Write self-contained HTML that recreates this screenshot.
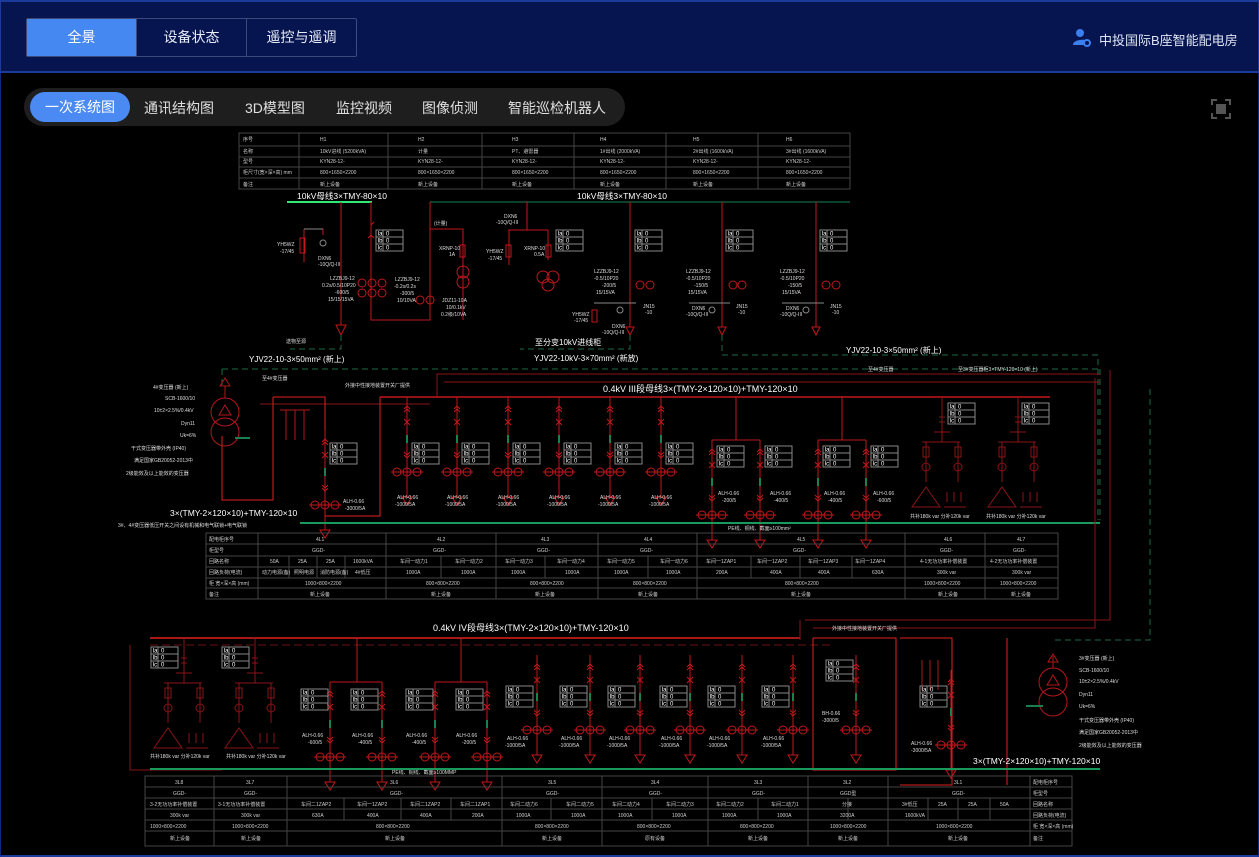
<!DOCTYPE html>
<html><head><meta charset="utf-8">
<style>
*{margin:0;padding:0;box-sizing:border-box}
body{width:1259px;height:857px;background:#000;overflow:hidden;position:relative;font-family:"Liberation Sans","Noto Sans CJK SC",sans-serif}
#hdr{position:absolute;left:0;top:0;width:1259px;height:73px;background:#061550;border-top:2px solid #1b3a9a;border-bottom:2px solid #1b3a9a;border-left:1px solid #1b3a9a;border-right:1px solid #1b3a9a}
.tabs{position:absolute;left:25px;top:16px;height:39px;display:flex;border:1px solid #3a4a7a;border-radius:2px}
.tabs div{width:110px;height:37px;line-height:37px;text-align:center;color:#e8ecf8;font-size:14px;border-left:1px solid #3a4a7a}
.tabs div:first-child{border-left:none;background:#4688f1;width:109px;color:#fff}
#user{position:absolute;left:1098px;top:28px;color:#dfe4f2;font-size:13px}
#frame{position:absolute;left:0;top:73px;width:1259px;height:784px;border-left:1px solid #0d2a80;border-right:1px solid #0d2a80;border-bottom:2px solid #1b3a9a}
#pill{position:absolute;left:24px;top:88px;width:601px;height:38px;background:#1e1e1e;border-radius:19px}
#pill span{position:absolute;top:10px;color:#e0e0e0;font-size:14px;white-space:nowrap}
#pill .act{left:6px;top:4px;width:100px;height:30px;background:#4a8af2;border-radius:15px;color:#fff;line-height:30px;text-align:center}
svg{position:absolute;left:0;top:0}
</style></head><body>
<div id="hdr">
 <div class="tabs"><div>全景</div><div>设备状态</div><div>遥控与遥调</div></div>
 <svg style="left:1071px;top:26px" width="20" height="20" viewBox="0 0 20 20"><circle cx="8" cy="5" r="4" fill="#3b7ff0"/><path d="M1,17 C1,11 15,11 15,13 L15,17Z" fill="#3b7ff0"/><circle cx="15" cy="15" r="3" fill="#061550" stroke="#3b7ff0" stroke-width="2"/></svg>
 <div id="user">中投国际B座智能配电房</div>
</div>
<div id="frame"></div>
<div id="pill"><span class="act">一次系统图</span><span style="left:120px">通讯结构图</span><span style="left:221px">3D模型图</span><span style="left:312px">监控视频</span><span style="left:398px">图像侦测</span><span style="left:484px">智能巡检机器人</span></div>
<svg style="left:1211px;top:99px" width="20" height="20"><path d="M1,6V1H6M14,1H19V6M19,14V19H14M6,19H1V14" stroke="#555" stroke-width="2" fill="none"/><rect x="5" y="5" width="10" height="10" fill="#555"/></svg>

<svg width="1259" height="857" font-family="Liberation Sans,Noto Sans CJK SC,sans-serif">
<defs>
 <g id="fd" stroke="#c0181c" fill="none">
  <line x1="0" y1="0" x2="0" y2="100"/>
  <path d="M-3,12L0,9L3,12M-3,15L0,12L3,15M-3,22L3,28M3,22L-3,28M-3,55L0,58L3,55M-3,58L0,61L3,58"/>
  <line x1="0" y1="38" x2="0" y2="46" stroke="#1a8050" stroke-width="2"/>
  <line x1="-16" y1="75" x2="16" y2="75"/><circle cx="0" cy="75" r="4"/><circle cx="-10" cy="75" r="4"/><circle cx="10" cy="75" r="4"/>
  <path d="M-5,100L5,100L0,108Z"/>
 </g>
 <g id="ib" font-size="6" fill="#fff">
  <rect x="0" y="0" width="27" height="21" fill="none" stroke="#888"/>
  <path d="M0,7H27M0,14H27M7,0V21" stroke="#888"/>
  <text x="1.5" y="5.5">Ia</text><text x="10" y="5.5">0</text>
  <text x="1.5" y="12.5">Ib</text><text x="10" y="12.5">0</text>
  <text x="1.5" y="19.5">Ic</text><text x="10" y="19.5">0</text>
 </g>
 <g id="cap" stroke="#8a1418" fill="none">
  <line x1="0" y1="0" x2="0" y2="45"/><path d="M-3,20h6M-3,25h6M-8,35h16"/>
  <path d="M-20,45H18M-16,45V85M16,45V85"/>
  <rect x="-19" y="50" width="6" height="10"/><rect x="13" y="50" width="6" height="10"/>
  <circle cx="-16" cy="70" r="4"/><circle cx="16" cy="70" r="4"/>
  <path d="M-30,110L-16,90L-2,110Z M5,105V95M12,105V95M19,105V95M2,110H24"/>
 </g>
 <g id="vt" stroke="#b0181c" fill="none"><circle cx="0" cy="0" r="14"/><circle cx="0" cy="20" r="14"/><path d="M-6,3L0,-7L6,3Z"/></g>
</defs>

<g stroke="#444" fill="none">
 <rect x="239" y="133" width="611" height="56"/>
 <path d="M239,146H850M239,157H850M239,167H850M239,178H850M299,133V189M388,133V189M482,133V189M574,133V189M666,133V189M758,133V189"/>
</g>
<g font-size="5" fill="#ccc">
 <text x="243" y="141">序号</text><text x="243" y="153">名称</text><text x="243" y="163">型号</text><text x="243" y="174">柜尺寸(宽×深×高) mm</text><text x="243" y="186">备注</text>
 <text x="320" y="141">H1</text><text x="418" y="141">H2</text><text x="512" y="141">H3</text><text x="600" y="141">H4</text><text x="693" y="141">H5</text><text x="786" y="141">H6</text>
 <text x="320" y="153">10kV进线 (5200kVA)</text><text x="418" y="153">计量</text><text x="512" y="153">PT、避雷器</text><text x="600" y="153">1#出线 (2000kVA)</text><text x="693" y="153">2#出线 (1600kVA)</text><text x="786" y="153">3#出线 (1600kVA)</text>
 <text x="320" y="163">KYN28-12-</text><text x="418" y="163">KYN28-12-</text><text x="512" y="163">KYN28-12-</text><text x="600" y="163">KYN28-12-</text><text x="693" y="163">KYN28-12-</text><text x="786" y="163">KYN28-12-</text>
 <text x="320" y="174">800×1650×2200</text><text x="418" y="174">800×1650×2200</text><text x="512" y="174">800×1650×2200</text><text x="600" y="174">800×1650×2200</text><text x="693" y="174">800×1650×2200</text><text x="786" y="174">800×1650×2200</text>
 <text x="320" y="186">新上设备</text><text x="418" y="186">新上设备</text><text x="512" y="186">新上设备</text><text x="600" y="186">新上设备</text><text x="693" y="186">新上设备</text><text x="786" y="186">新上设备</text>
</g>

<text x="297" y="199" font-size="8.5" fill="#fff">10kV母线3×TMY-80×10</text>
<text x="577" y="199" font-size="8.5" fill="#fff">10kV母线3×TMY-80×10</text>
<line x1="287" y1="202" x2="372" y2="202" stroke="#2ee87a" stroke-width="2"/>
<line x1="430" y1="202" x2="850" y2="202" stroke="#1a8050" stroke-width="1"/>
<g stroke="#c0181c" fill="none">
 <path d="M341,202V325M371,202V320H430V202M304,229H323V235M304,229V262"/>
 <rect x="300" y="238" width="5" height="15"/>
 <path d="M430,229H463V320M463,229"/>
 <path d="M371,225L374,222M371,235l-3,3 3,-3 3,3"/>
 <path d="M336,325L346,325L341,335Z"/>
 <circle cx="372" cy="283" r="4"/><circle cx="382" cy="283" r="4"/><circle cx="362" cy="283" r="4"/><circle cx="372" cy="293" r="4"/><circle cx="382" cy="293" r="4"/><circle cx="362" cy="293" r="4"/><circle cx="420" cy="300" r="4"/><circle cx="430" cy="300" r="4"/>
 <circle cx="463" cy="272" r="6"/><circle cx="463" cy="282" r="6"/><rect x="460" y="245" width="5" height="12"/>
 <path d="M527,202V230M508,230H548M509,230V265M548,230V260"/><rect x="506" y="245" width="5" height="12"/><rect x="546" y="245" width="5" height="12"/>
 <circle cx="543" cy="277" r="6"/><circle cx="553" cy="277" r="6"/><circle cx="548" cy="285" r="6"/>
 <path d="M630,202V327M722,202V327M816,202V327"/>
 <path d="M626,327h8l-4,8z M718,327h8l-4,8z M812,327h8l-4,8z"/>
 <circle cx="640" cy="285" r="4"/><circle cx="650" cy="285" r="4"/><circle cx="733" cy="285" r="4"/><circle cx="742" cy="285" r="4"/><circle cx="826" cy="285" r="4"/><circle cx="836" cy="285" r="4"/>
 <rect x="592" y="310" width="5" height="12"/>
</g>
<g stroke="#888" fill="none"><path d="M594,303H636M689,303H730M782,303H824M304,229H323"/><circle cx="323" cy="243" r="3"/><circle cx="620" cy="310" r="3"/><circle cx="712" cy="310" r="3"/><circle cx="806" cy="310" r="3"/></g>
<use href="#ib" x="376" y="230"/><use href="#ib" x="556" y="230"/><use href="#ib" x="635" y="230"/><use href="#ib" x="726" y="230"/><use href="#ib" x="820" y="230"/>
<g font-size="5" fill="#ddd">
 <text x="277" y="246">YH5WZ</text><text x="280" y="253">-17/45</text><text x="318" y="260">DXN6</text><text x="318" y="266">-10Q/Q-III</text>
 <text x="330" y="280">LZZBJ9-12</text><text x="322" y="287">0.2s/0.5/10P20</text><text x="335" y="294">-600/5</text><text x="328" y="301">15/15/15VA</text>
 <text x="395" y="281">LZZBJ9-12</text><text x="394" y="288">-0.2s/0.2s</text><text x="400" y="295">-300/5</text><text x="397" y="302">10/10VA</text>
 <text x="442" y="302">JDZ11-10A</text><text x="446" y="309">10/0.1kV</text><text x="441" y="316">0.2级/10VA</text>
 <text x="434" y="225">(计量)</text><text x="439" y="250">XRNP-10</text><text x="449" y="256">1A</text>
 <text x="504" y="218">DXN6</text><text x="496" y="224">-10Q/Q-III</text><text x="486" y="253">YH5WZ</text><text x="488" y="260">-17/45</text><text x="524" y="250">XRNP-10</text><text x="534" y="256">0.5A</text>
 <text x="594" y="273">LZZBJ9-12</text><text x="594" y="280">-0.5/10P20</text><text x="602" y="287">-200/5</text><text x="596" y="294">15/15VA</text>
 <text x="686" y="273">LZZBJ9-12</text><text x="686" y="280">-0.5/10P20</text><text x="694" y="287">-150/5</text><text x="688" y="294">15/15VA</text>
 <text x="780" y="273">LZZBJ9-12</text><text x="780" y="280">-0.5/10P20</text><text x="788" y="287">-150/5</text><text x="782" y="294">15/15VA</text>
 <text x="572" y="316">YH5WZ</text><text x="574" y="322">-17/45</text><text x="612" y="328">DXN6</text><text x="602" y="334">-10Q/Q-III</text><text x="643" y="308">JN15</text><text x="645" y="314">-10</text>
 <text x="692" y="310">DXN6</text><text x="686" y="316">-10Q/Q-III</text><text x="736" y="308">JN15</text><text x="738" y="314">-10</text>
 <text x="786" y="310">DXN6</text><text x="780" y="316">-10Q/Q-III</text><text x="830" y="308">JN15</text><text x="832" y="314">-10</text>
 <text x="286" y="343">送物至源</text>
</g>
<g font-size="8" fill="#fff">
 <text x="249" y="362">YJV22-10-3×50mm² (新上)</text><text x="535" y="345">至分变10kV进线柜</text><text x="534" y="361">YJV22-10kV-3×70mm² (新放)</text><text x="846" y="353">YJV22-10-3×50mm² (新上)</text>
</g>
<g stroke="#1a6a44" fill="none" stroke-dasharray="6,4">
 <path d="M222,369H1100M341,335V349H290M630,335V349H520M722,335V355H1098V520M222,369V385M1100,369V520"/>
</g>

<text x="603" y="392" font-size="9" fill="#fff">0.4kV III段母线3×(TMY-2×120×10)+TMY-120×10</text>
<g stroke="#8a1418" fill="none"><path d="M437,397V374H1100M444,382H1100M430,404H260"/></g>
<line x1="380" y1="397" x2="1050" y2="397" stroke="#c0181c" stroke-width="1.5"/>
<g stroke="#e02020" fill="none"><path d="M273,397H325V516H380V397"/><path d="M222,436V500H273V397"/></g>
<use href="#vt" x="225" y="412"/>
<g stroke="#b0181c" fill="none"><path d="M225,386V398M220,386h10l-5,-8z"/><path d="M286,410V440M295,410V440M304,410V440M280,410H310"/></g>
<line x1="235" y1="438" x2="250" y2="438" stroke="#1a8050" stroke-width="2"/>
<use href="#fd" x="325" y="430"/>
<use href="#ib" x="330" y="443"/>
<g><use href="#fd" x="407" y="397"/><use href="#fd" x="457" y="397"/><use href="#fd" x="508" y="397"/><use href="#fd" x="559" y="397"/><use href="#fd" x="610" y="397"/><use href="#fd" x="661" y="397"/>
<use href="#ib" x="412" y="443"/><use href="#ib" x="462" y="443"/><use href="#ib" x="513" y="443"/><use href="#ib" x="564" y="443"/><use href="#ib" x="615" y="443"/><use href="#ib" x="666" y="443"/>
<use href="#fd" x="712" y="440"/><use href="#fd" x="760" y="440"/><use href="#fd" x="818" y="440"/><use href="#fd" x="866" y="440"/>
<use href="#ib" x="717" y="446"/><use href="#ib" x="765" y="446"/><use href="#ib" x="823" y="446"/><use href="#ib" x="871" y="446"/>
<use href="#ib" x="948" y="403"/><use href="#ib" x="1022" y="403"/></g>
<g stroke="#c0181c" fill="none"><path d="M736,397V440M712,440H760M842,397V440M818,440H866"/></g>
<use href="#cap" x="942" y="397"/><use href="#cap" x="1018" y="397"/>
<g font-size="5" fill="#ddd">
 <text x="153" y="389">4#变压器 (新上)</text><text x="165" y="400">SCB-1600/10</text><text x="154" y="412">10±2×2.5%/0.4kV</text><text x="181" y="425">Dyn11</text><text x="180" y="437">Uk=6%</text>
 <text x="131" y="450">干式变压器带外壳 (IP40)</text><text x="134" y="462">满足国家GB20052-2013中</text><text x="126" y="475">2级能效及以上能效的变压器</text>
 <text x="262" y="380">至4#变压器</text><text x="345" y="387">外接中性接地装置开关厂提供</text>
 <text x="343" y="503">ALH-0.66</text><text x="345" y="510">-3000/5A</text>
 <text x="397" y="499">ALH-0.66</text><text x="395" y="506">-1000/5A</text><text x="447" y="499">ALH-0.66</text><text x="445" y="506">-1000/5A</text><text x="498" y="499">ALH-0.66</text><text x="496" y="506">-1000/5A</text><text x="549" y="499">ALH-0.66</text><text x="547" y="506">-1000/5A</text><text x="600" y="499">ALH-0.66</text><text x="598" y="506">-1000/5A</text><text x="651" y="499">ALH-0.66</text><text x="649" y="506">-1000/5A</text>
 <text x="718" y="495">ALH-0.66</text><text x="722" y="502">-200/5</text><text x="770" y="495">ALH-0.66</text><text x="774" y="502">-400/5</text><text x="824" y="495">ALH-0.66</text><text x="828" y="502">-400/5</text><text x="873" y="495">ALH-0.66</text><text x="877" y="502">-600/5</text>
 <text x="910" y="518">共补180k var 分补120k var</text><text x="986" y="518">共补180k var 分补120k var</text>
 <text x="868" y="371">至4#变压器</text><text x="958" y="371">至3#变压器柜3×TMY-120×10 (新上)</text>
 <text x="118" y="527">3#、4#变压器低压开关之间设有机械和电气联锁+电气联锁</text><text x="728" y="530">PE线、铜线、截面≥100mm²</text>
</g>
<text x="170" y="516" font-size="8.5" fill="#fff">3×(TMY-2×120×10)+TMY-120×10</text>
<line x1="300" y1="523" x2="1100" y2="523" stroke="#1a9a5a" stroke-width="2"/>

<g stroke="#444" fill="none">
 <rect x="206" y="533" width="852" height="66"/>
 <path d="M206,544H1058M206,556H1058M206,567H1058M206,578H1058M206,588H1058M258,533V599M386,533V599M496,533V599M598,533V599M697,533V599M905,533V599M985,533V599M289,556V578M317,556V578M345,556V578M441,556V578M545,556V578M648,556V578M751,556V578M800,556V578M852,556V578"/>
</g>
<g font-size="5" fill="#ccc">
 <text x="209" y="541">配电柜序号</text><text x="209" y="552">柜型号</text><text x="209" y="563">回路名称</text><text x="209" y="574">回路负荷(电流)</text><text x="209" y="585">柜 宽×深×高 (mm)</text><text x="209" y="596">备注</text>
 <text x="316" y="541">4L1</text><text x="437" y="541">4L2</text><text x="541" y="541">4L3</text><text x="644" y="541">4L4</text><text x="797" y="541">4L5</text><text x="944" y="541">4L6</text><text x="1017" y="541">4L7</text>
 <text x="312" y="552">GGD-</text><text x="433" y="552">GGD-</text><text x="537" y="552">GGD-</text><text x="640" y="552">GGD-</text><text x="793" y="552">GGD-</text><text x="940" y="552">GGD-</text><text x="1013" y="552">GGD-</text>
 <text x="270" y="563">50A</text><text x="298" y="563">25A</text><text x="326" y="563">25A</text><text x="353" y="563">1600kVA</text><text x="400" y="563">车间一动力1</text><text x="455" y="563">车间一动力2</text><text x="505" y="563">车间一动力3</text><text x="557" y="563">车间一动力4</text><text x="607" y="563">车间一动力5</text><text x="660" y="563">车间一动力6</text><text x="706" y="563">车间一1ZAP1</text><text x="757" y="563">车间一1ZAP2</text><text x="808" y="563">车间一1ZAP3</text><text x="855" y="563">车间一1ZAP4</text><text x="920" y="563">4-1无功功率补偿装置</text><text x="990" y="563">4-2无功功率补偿装置</text>
 <text x="262" y="574">动力电源(备)</text><text x="294" y="574">照明电源</text><text x="320" y="574">消防电源(备)</text><text x="355" y="574">4#低压</text><text x="406" y="574">1000A</text><text x="461" y="574">1000A</text><text x="511" y="574">1000A</text><text x="565" y="574">1000A</text><text x="614" y="574">1000A</text><text x="666" y="574">1000A</text><text x="716" y="574">200A</text><text x="770" y="574">400A</text><text x="818" y="574">400A</text><text x="872" y="574">630A</text><text x="937" y="574">300k var</text><text x="1012" y="574">300k var</text>
 <text x="305" y="585">1000×800×2200</text><text x="426" y="585">800×800×2200</text><text x="530" y="585">800×800×2200</text><text x="633" y="585">800×800×2200</text><text x="785" y="585">800×800×2200</text><text x="924" y="585">1000×800×2200</text><text x="1000" y="585">1000×800×2200</text>
 <text x="310" y="596">新上设备</text><text x="431" y="596">新上设备</text><text x="535" y="596">新上设备</text><text x="638" y="596">新上设备</text><text x="791" y="596">新上设备</text><text x="938" y="596">新上设备</text><text x="1011" y="596">新上设备</text>
</g>

<text x="433" y="631" font-size="9" fill="#fff">0.4kV IV段母线3×(TMY-2×120×10)+TMY-120×10</text>
<line x1="150" y1="638" x2="800" y2="638" stroke="#e02020" stroke-width="1.5"/>
<g stroke="#6a1014" fill="none" stroke-dasharray="8,4"><path d="M150,645H830"/></g>
<g stroke="#8a1418" fill="none"><path d="M130,645V770H222M805,620H1110V370M813,628H1095V378M800,620V640"/></g>
<g stroke="#e02020" fill="none"><path d="M813,638H896V770H813V638M900,638H952V785H900M1007,638V785"/></g>
<use href="#vt" x="1053" y="682"/>
<g stroke="#b0181c" fill="none"><path d="M1053,656V668M1048,662h10l-5,-8zM922,660V690M930,660V690M938,660V690"/></g>
<line x1="1026" y1="706" x2="1043" y2="706" stroke="#1a8050" stroke-width="2"/>
<g stroke="#1a6a44" fill="none" stroke-dasharray="6,4"><path d="M1055,640H1150V385"/></g>
<use href="#cap" x="184" y="638"/><use href="#cap" x="255" y="638"/>
<use href="#ib" x="151" y="647"/><use href="#ib" x="222" y="647"/>
<g stroke="#c0181c" fill="none"><path d="M357,638V682M330,682H382M461,638V682H435M461,682H487"/></g>
<use href="#fd" x="330" y="682"/><use href="#fd" x="382" y="682"/><use href="#fd" x="435" y="682"/><use href="#fd" x="487" y="682"/>
<use href="#ib" x="301" y="689"/><use href="#ib" x="351" y="689"/><use href="#ib" x="406" y="689"/><use href="#ib" x="456" y="689"/>
<use href="#fd" x="537" y="655"/><use href="#fd" x="590" y="655"/><use href="#fd" x="640" y="655"/><use href="#fd" x="690" y="655"/><use href="#fd" x="742" y="655"/><use href="#fd" x="793" y="655"/>
<use href="#ib" x="506" y="686"/><use href="#ib" x="560" y="686"/><use href="#ib" x="608" y="686"/><use href="#ib" x="660" y="686"/><use href="#ib" x="708" y="686"/><use href="#ib" x="762" y="686"/>
<use href="#fd" x="856" y="655"/><use href="#ib" x="826" y="660"/>
<use href="#fd" x="951" y="670"/><use href="#ib" x="920" y="686"/>
<g font-size="5" fill="#ddd">
 <text x="150" y="758">共补180k var 分补120k var</text><text x="226" y="758">共补180k var 分补120k var</text>
 <text x="302" y="737">ALH-0.66</text><text x="308" y="744">-600/5</text><text x="352" y="737">ALH-0.66</text><text x="358" y="744">-400/5</text><text x="406" y="737">ALH-0.66</text><text x="412" y="744">-400/5</text><text x="456" y="737">ALH-0.66</text><text x="462" y="744">-200/5</text>
 <text x="507" y="740">ALH-0.66</text><text x="505" y="747">-1000/5A</text><text x="561" y="740">ALH-0.66</text><text x="559" y="747">-1000/5A</text><text x="609" y="740">ALH-0.66</text><text x="607" y="747">-1000/5A</text><text x="661" y="740">ALH-0.66</text><text x="659" y="747">-1000/5A</text><text x="709" y="740">ALH-0.66</text><text x="707" y="747">-1000/5A</text><text x="763" y="740">ALH-0.66</text><text x="761" y="747">-1000/5A</text>
 <text x="822" y="715">BH-0.66</text><text x="822" y="722">-3000/5</text><text x="911" y="745">ALH-0.66</text><text x="911" y="752">-3000/5A</text>
 <text x="832" y="630">外接中性接地装置开关厂提供</text>
 <text x="1079" y="660">3#变压器 (新上)</text><text x="1079" y="672">SCB-1600/10</text><text x="1079" y="683">10±2×2.5%/0.4kV</text><text x="1079" y="696">Dyn11</text><text x="1079" y="708">Uk=6%</text><text x="1079" y="722">干式变压器带外壳 (IP40)</text><text x="1079" y="734">满足国家GB20052-2013中</text><text x="1079" y="747">2级能效及以上能效的变压器</text>
 <text x="392" y="774">PE线、铜线、截面≥100MMP</text>
</g>
<text x="973" y="764" font-size="8.5" fill="#fff">3×(TMY-2×120×10)+TMY-120×10</text>
<line x1="150" y1="769" x2="1100" y2="769" stroke="#1a9a5a" stroke-width="2"/>

<g stroke="#444" fill="none">
 <rect x="145" y="776" width="927" height="70"/>
 <path d="M145,787H1072M145,798H1072M145,809H1072M145,820H1072M145,831H1072M214,776V846M287,776V846M502,776V846M602,776V846M708,776V846M808,776V846M888,776V846M1030,776V846M344,798V820M401,798V820M451,798V820M551,798V820M652,798V820M758,798V820M848,798V820M928,798V820M958,798V820M990,798V820"/>
</g>
<g font-size="5" fill="#ccc">
 <text x="175" y="784">3L8</text><text x="246" y="784">3L7</text><text x="390" y="784">3L6</text><text x="548" y="784">3L5</text><text x="651" y="784">3L4</text><text x="754" y="784">3L3</text><text x="843" y="784">3L2</text><text x="954" y="784">3L1</text><text x="1033" y="784">配电柜序号</text>
 <text x="173" y="795">GGD-</text><text x="244" y="795">GGD-</text><text x="390" y="795">GGD-</text><text x="546" y="795">GGD-</text><text x="649" y="795">GGD-</text><text x="752" y="795">GGD-</text><text x="840" y="795">GGD型</text><text x="952" y="795">GGD-</text><text x="1033" y="795">柜型号</text>
 <text x="150" y="806">3-2无功功率补偿装置</text><text x="218" y="806">3-1无功功率补偿装置</text><text x="301" y="806">车间二1ZAP2</text><text x="357" y="806">车间一1ZAP2</text><text x="410" y="806">车间二1ZAP2</text><text x="460" y="806">车间二1ZAP1</text><text x="510" y="806">车间二动力6</text><text x="566" y="806">车间二动力5</text><text x="612" y="806">车间二动力4</text><text x="666" y="806">车间二动力3</text><text x="716" y="806">车间二动力2</text><text x="771" y="806">车间二动力1</text><text x="842" y="806">分接</text><text x="902" y="806">3#低压</text><text x="938" y="806">25A</text><text x="968" y="806">25A</text><text x="1000" y="806">50A</text><text x="1033" y="806">回路名称</text>
 <text x="170" y="817">300k var</text><text x="241" y="817">300k var</text><text x="312" y="817">630A</text><text x="367" y="817">400A</text><text x="420" y="817">400A</text><text x="472" y="817">200A</text><text x="516" y="817">1000A</text><text x="571" y="817">1000A</text><text x="618" y="817">1000A</text><text x="672" y="817">1000A</text><text x="722" y="817">1000A</text><text x="777" y="817">1000A</text><text x="840" y="817">3200A</text><text x="905" y="817">1600kVA</text><text x="1033" y="817">回路负荷(电流)</text>
 <text x="150" y="828">1000×800×2200</text><text x="232" y="828">1000×800×2200</text><text x="376" y="828">800×800×2200</text><text x="535" y="828">800×800×2200</text><text x="637" y="828">800×800×2200</text><text x="740" y="828">800×800×2200</text><text x="830" y="828">1000×800×2200</text><text x="936" y="828">1000×800×2200</text><text x="1033" y="828">柜 宽×深×高 (mm)</text>
 <text x="170" y="840">新上设备</text><text x="241" y="840">新上设备</text><text x="385" y="840">新上设备</text><text x="542" y="840">新上设备</text><text x="645" y="840">原有设备</text><text x="748" y="840">新上设备</text><text x="838" y="840">新上设备</text><text x="948" y="840">新上设备</text><text x="1033" y="840">备注</text>
</g>
</svg>
</body></html>
